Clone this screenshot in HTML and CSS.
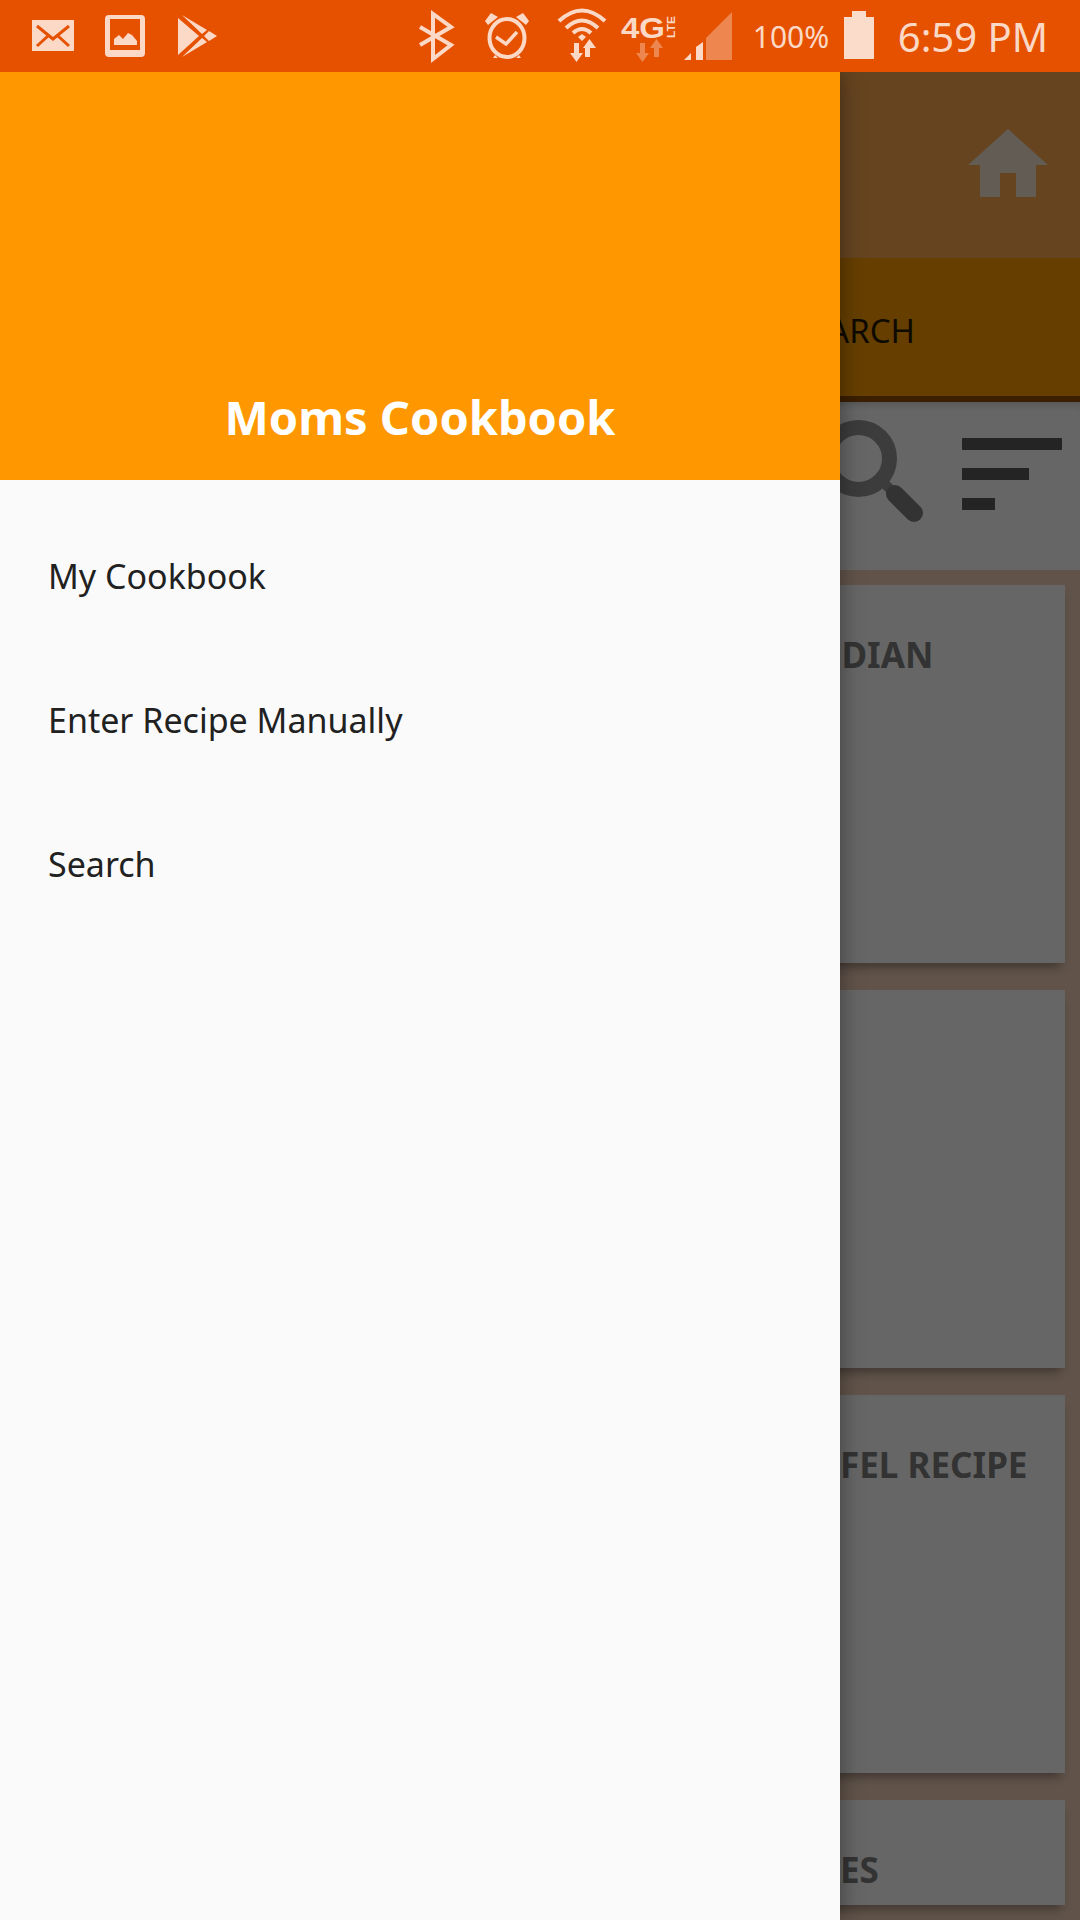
FILE: index.html
```html
<!DOCTYPE html>
<html>
<head>
	<meta charset="utf-8">
	<title>Moms Cookbook</title>
	<link rel="stylesheet" href="styles.css">
</head>
<body>
	<div class="screen">
		<!-- status bar: icons use page coordinates inside their viewBox -->
		<div class="statusbar">
			<div class="status-left">
				<svg class="ico" width="73" height="72" viewBox="32 0 73 72">
					<rect x="32" y="20" width="42" height="31" fill="#fbd9c6"/>
					<path d="M37 26 L53 39 L69 26 M37 46 L48 36 M69 46 L58 36" fill="none" stroke="#e65100" stroke-width="3"/>
				</svg>
				<svg class="ico" width="73" height="72" viewBox="105 0 73 72">
					<path fill-rule="evenodd" d="M109 15 H141 Q145 15 145 19 V53 Q145 57 141 57 H109 Q105 57 105 53 V19 Q105 15 109 15 Z M110 19 V50 H140 V19 Z" fill="#fbd9c6"/>
					<path d="M114 45 V39 L119 35 L123 39 L128 33 L132 35 L137 41 V45 Z" fill="#fbd9c6"/>
				</svg>
				<svg class="ico" width="40" height="72" viewBox="178 0 40 72">
					<path d="M178 18 L199 36 L178 55 Z M182 15 L207 30 L202 34 Z M182 57 L207 42 L202 38 Z M209 31 L217 36 L209 41 L204 36 Z" fill="#fbd9c6"/>
				</svg>
			</div>
			<div class="status-right">
				<svg class="ico" width="65" height="72" viewBox="419 0 65 72">
					<path d="M420 27 L451 45 L433 59 V14 L451 27 L420 45" fill="none" stroke="#fbd9c6" stroke-width="4"/>
				</svg>
				<svg class="ico" width="73" height="72" viewBox="484 0 73 72">
					<ellipse cx="507" cy="38" rx="17.500" ry="19" fill="none" stroke="#fbd9c6" stroke-width="4"/>
					<path d="M496 37 L506 44 L517 32" fill="none" stroke="#fbd9c6" stroke-width="3.500"/>
					<path d="M485 21 L491 13 L498 17 L488 25 Z M529 21 L523 13 L516 17 L526 25 Z M493 58 L495 55 L498 58 Z M521 58 L519 55 L516 58 Z" fill="#fbd9c6"/>
				</svg>
				<svg class="ico" width="64" height="72" viewBox="557 0 64 72">
					<path d="M559 21 Q582 0 605 21 M566 28 Q582 13 598 28 M573 33 Q582 25 591 33" fill="none" stroke="#fbd9c6" stroke-width="4"/>
					<path d="M578 37 L582 34 L586 37 L582 41 Z" fill="#fbd9c6"/>
					<path d="M574 43 H579 V53 H583 L576.500 62 L570 53 H574 Z M590 57 H585 V48 H583 L589.500 39 L596 48 H590 Z" fill="#fbd9c6"/>
				</svg>
				<svg class="ico" width="63" height="72" viewBox="621 0 63 72">
					<text class="net" x="621" y="38" textLength="44" lengthAdjust="spacingAndGlyphs">4G</text>
					<text class="lte" transform="translate(675 38) rotate(-90)" textLength="22" lengthAdjust="spacingAndGlyphs">LTE</text>
					<path class="dim" d="M640 43 H645 V53 H649 L642.500 62 L636 53 H640 Z M654 57 H659 V48 H663 L656.500 39 L650 48 H654 Z" fill="#fbd9c6"/>
				</svg>
				<svg class="ico" width="69" height="72" viewBox="684 0 69 72">
					<path d="M684 60 L691 53 V60 Z M696 47 L703 42 V60 H696 Z" fill="#fbd9c6"/>
					<path class="dim" d="M706 38 L732 12 V60 H706 Z" fill="#fbd9c6"/>
				</svg>
				<span class="batt-text">100%</span>
				<svg class="ico batt" width="30" height="72" viewBox="844 0 30 72">
					<path d="M852 11 H866 V17 H874 V59 H844 V17 H852 Z" fill="#fbdccb"/>
				</svg>
				<span class="clock">6:59 PM</span>
			</div>
		</div>

		<!-- the app behind the drawer -->
		<div class="app">
			<div class="toolbar">
				<svg width="80" height="68" viewBox="968 129 80 68">
					<path d="M968 165 L1008 129 L1048 165 H1036 V197 H1016 V173 H1000 V197 H980 V165 Z" fill="#f5e6d4"/>
				</svg>
			</div>
			<div class="tabbar"><span class="tab-label">ARCH</span></div>
			<div class="tools">
				<svg class="tool-search" width="105" height="105" viewBox="820 420 105 105">
					<path d="M880 479 L892 491" stroke="#969696" stroke-width="10"/>
					<path d="M895 494 L914 513" stroke="#808080" stroke-width="18" stroke-linecap="round"/>
					<circle cx="858.500" cy="458.500" r="31" fill="none" stroke="#969696" stroke-width="15"/>
				</svg>
				<div class="sort">
					<div class="sort-line sort-long"></div>
					<div class="sort-line sort-mid"></div>
					<div class="sort-line sort-short"></div>
				</div>
			</div>
			<div class="list">
				<div class="card"><div class="card-title card-title-back">UDIAN</div></div>
				<div class="card"></div>
				<div class="card"><div class="card-title">FEL RECIPE</div></div>
				<div class="card card-cut"><div class="card-title">ES</div></div>
			</div>
			<div class="scrim"></div>
		</div>

		<!-- navigation drawer -->
		<div class="drawer">
			<div class="drawer-head">Moms Cookbook</div>
			<div class="drawer-menu">
				<div class="drawer-item">My Cookbook</div>
				<div class="drawer-item">Enter Recipe Manually</div>
				<div class="drawer-item">Search</div>
			</div>
		</div>
	</div>
</body>
</html>
```

FILE: styles.css
```css
* {
  box-sizing: border-box;
}

body {
  margin: 0;
  font-family: "Noto Sans", sans-serif;
}

.screen {
  position: relative;
  width: 1080px;
  height: 1920px;
  overflow: hidden;
}

.statusbar {
  position: relative;
  z-index: 3;
  height: 72px;
  padding: 0 32px;
  display: flex;
  justify-content: space-between;
  background-color: #e65100;
  color: #fbd9c6;
}
.status-left, .status-right {
  display: flex;
  align-items: center;
}
.ico {
  display: block;
}
.ico .dim {
  opacity: 0.4;
}
.net {
  font-family: "Liberation Sans", sans-serif;
  font-weight: bold;
  font-size: 30px;
  fill: #fbd9c6;
}
.lte {
  font-family: "Liberation Sans", sans-serif;
  font-weight: bold;
  font-size: 11px;
  fill: #fbd9c6;
}
.batt-text {
  width: 91px;
  font-size: 30px;
}
.batt {
  margin-right: 24px;
}
.clock {
  font-size: 40px;
}

.app {
  position: relative;
  height: 1848px;
  background-color: #f2d0b9;
}
.toolbar {
  height: 186px;
  padding: 57px 32px 0 0;
  display: flex;
  justify-content: flex-end;
  background-color: #ffaa50;
}
.tabbar {
  height: 144px;
  padding: 53px 165px 0 0;
  display: flex;
  justify-content: flex-end;
  background-color: #ff9d00;
  border-bottom: 6px solid #944e00;
}
.tab-label {
  font-size: 33px;
  line-height: 40px;
  color: #261900;
}
.tools {
  height: 168px;
  padding: 18px 18px 0 0;
  display: flex;
  justify-content: flex-end;
  gap: 37px;
  background-color: #fff;
  box-shadow: inset 0 8px 8px -6px rgba(0, 0, 0, 0.2);
}
.tool-search {
  display: block;
}
.sort {
  padding-top: 18px;
  width: 100px;
  display: flex;
  flex-direction: column;
  gap: 18px;
}
.sort-line {
  height: 12px;
  background-color: #5a5a5a;
}
.sort-long {
  width: 100px;
}
.sort-mid {
  width: 67px;
}
.sort-short {
  width: 33px;
}

.list {
  padding: 15px 15px 0;
  display: flex;
  flex-direction: column;
  gap: 27px;
}
.card {
  height: 378px;
  padding: 48px 0 0 825px;
  background-color: #fff;
  box-shadow: 0 8px 10px -4px rgba(0, 0, 0, 0.35);
}
.card-cut {
  height: 105px;
}
.card-title {
  font-size: 35px;
  font-weight: bold;
  line-height: 44px;
  white-space: nowrap;
  color: #808080;
}
.card-title-back {
  margin-left: -25px;
}

.scrim {
  position: absolute;
  left: 0;
  top: 0;
  right: 0;
  bottom: 0;
  background-color: rgba(0, 0, 0, 0.6);
}

.drawer {
  position: absolute;
  z-index: 2;
  left: 0;
  top: 72px;
  bottom: 0;
  width: 840px;
  background-color: #fafafa;
  box-shadow: 0 0 22px rgba(0, 0, 0, 0.4);
}
.drawer-head {
  height: 408px;
  padding-bottom: 31px;
  display: flex;
  align-items: flex-end;
  justify-content: center;
  background-color: #ff9800;
  color: #fff;
  font-size: 47px;
  font-weight: bold;
  line-height: 64px;
}
.drawer-menu {
  padding-top: 24px;
}
.drawer-item {
  height: 144px;
  padding-left: 48px;
  display: flex;
  align-items: center;
  font-size: 34px;
  color: #212121;
}
```
